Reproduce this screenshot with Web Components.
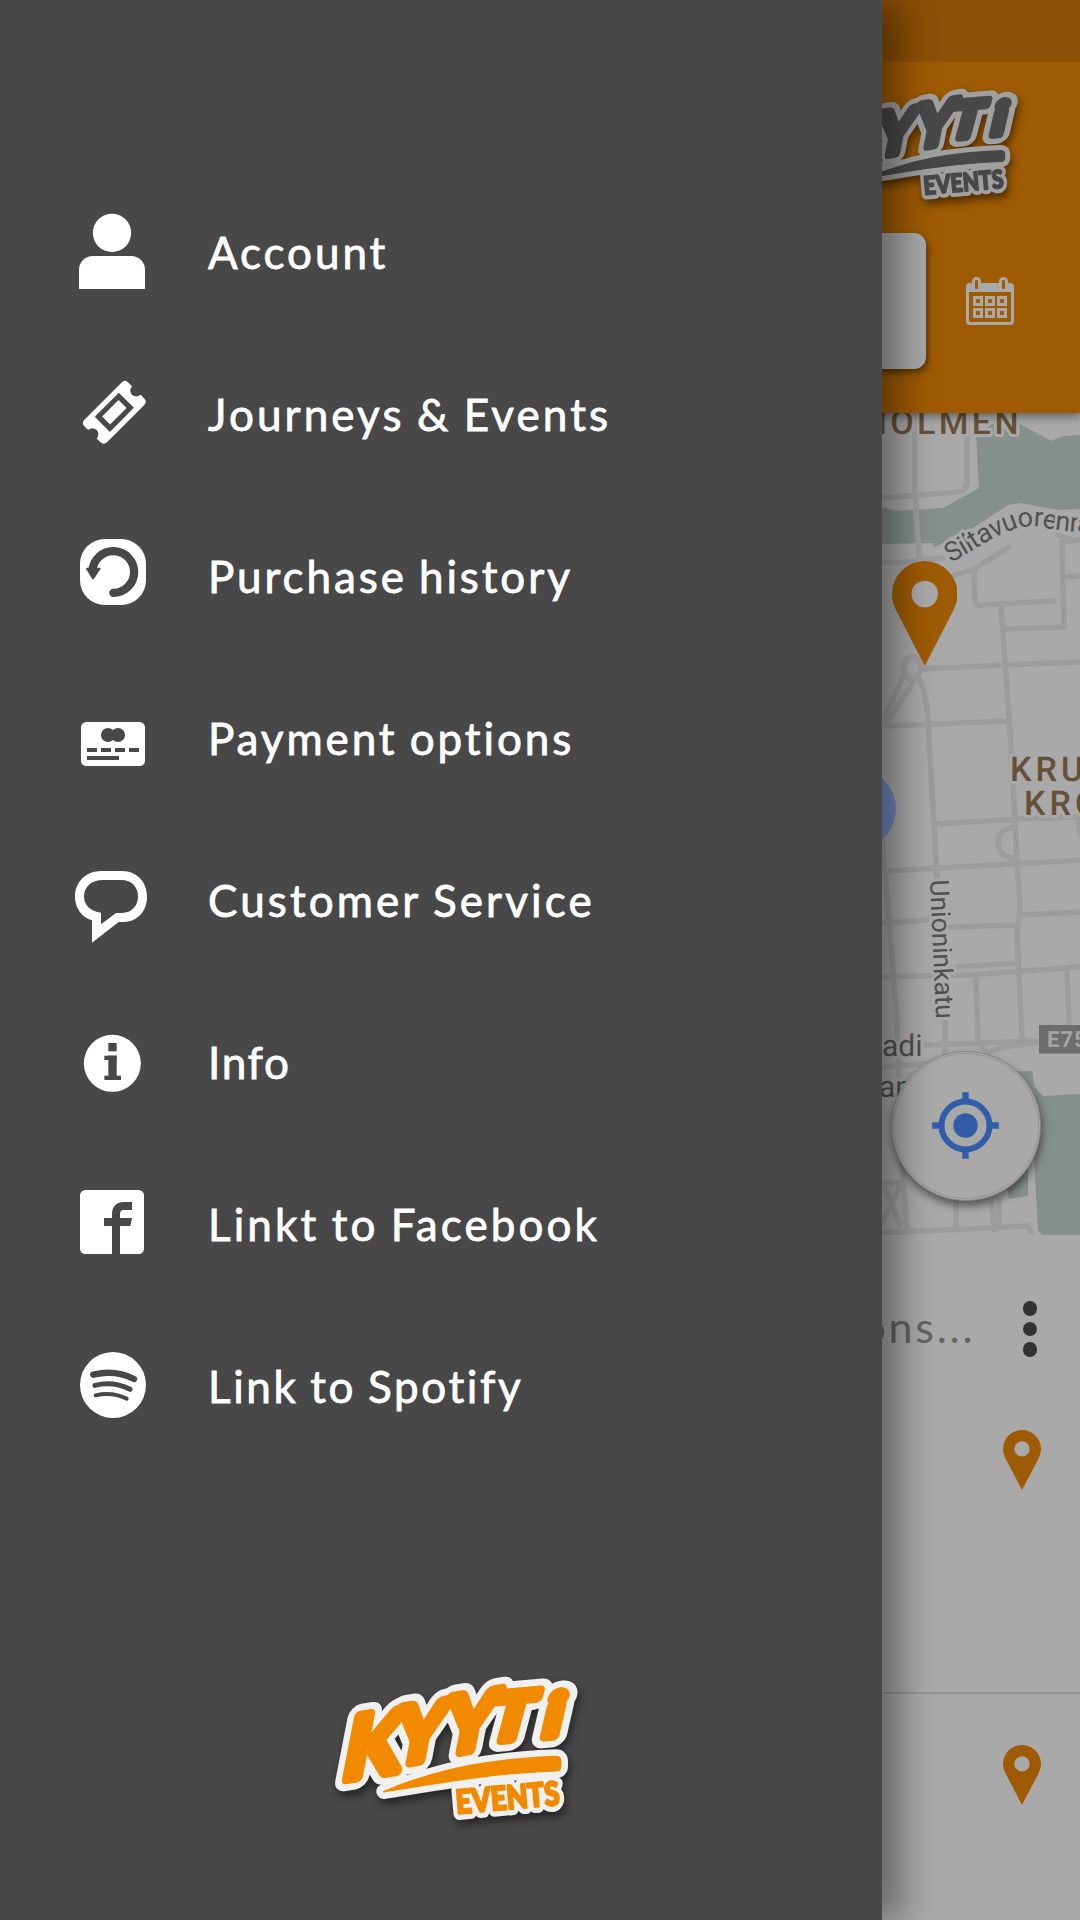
<!DOCTYPE html>
<html lang="en">
<head>
<meta charset="utf-8">
<title>Kyyti Events</title>
<style>
  html, body { margin: 0; height: 100%; }
  body {
    font-family: Lato, "Liberation Sans", sans-serif;
    background: #a9a9a9;
    overflow: hidden;
  }
</style>
</head>
<body>
<kyyti-app></kyyti-app>

<script>
/* Icons share a 240-unit square; --bg is the colour cut out of the glyph. */
const ICONS = {
  account: `
    <circle cx="120" cy="62.500" r="57.500"/>
    <path d="M21 231V174a42 42 0 0 1 42-42H177a42 42 0 0 1 42 42V231Z"/>`,
  ticket: `
    <g transform="translate(127 115) rotate(-45)">
      <path d="M-78-48H78Q93-48 93-33V-18A18 18 0 0 0 93 18V33Q93 48 78 48H-78Q-93 48-93 33V18A18 18 0 0 0-93-18V-33Q-93-48-78-48Z"/>
      <path class="cut" d="M-51-32H51V32H-51Z"/>
      <path d="M-35-17H35V17H-35Z"/>
    </g>`,
  history: `
    <rect x="24" y="9" width="198" height="198" rx="74"/>
    <path class="cut-line" stroke-width="25" d="M61.500 104A62.500 62.500 0 1 1 124 170.500"/>
    <path class="cut" d="M45 95H83Q88 95 85 100L66 128Q63 132 60 128L43 100Q40 95 45 95Z"/>`,
  card: `
    <rect x="27" y="72" width="192" height="132" rx="16"/>
    <g class="cut">
      <circle cx="108" cy="111" r="21"/><circle cx="138" cy="111" r="21"/>
      <path d="M45 150h30v12h-30zM87 150h30v12h-30zM129 150h30v12h-30zM171 150h30v12h-30zM45 174h96v12h-96z"/>
    </g>`,
  chat: `
    <path fill-rule="evenodd" d="M87 33H150C195 33 225 66 225 110C225 154 195 186 152 186H140L60 248V181C30 172 9 145 9 110C9 66 42 33 87 33ZM92 60C60 60 36 80 36 109C36 136 56 155 87 158V193L132 159H150C178 159 198 139 198 109C198 80 178 60 148 60Z"/>`,
  info: `
    <circle cx="121" cy="124" r="85.500"/>
    <g class="cut">
      <rect x="109" y="63" width="25" height="25"/>
      <rect x="97" y="101" width="37" height="13"/>
      <rect x="109" y="101" width="25" height="73"/>
      <rect x="97" y="161" width="50" height="13"/>
    </g>`,
  facebook: `
    <rect x="24" y="18" width="192" height="192" rx="16"/>
    <path class="cut" d="M120 211V126H96V102H120V90C120 68 133 54 156 54H180V78H156Q144 78 144 90V102H180L175 126H144V211Z"/>`,
  spotify: `
    <circle cx="123" cy="117" r="99"/>
    <path class="cut-line" stroke-width="19" d="M64 86Q130 70 186 99"/>
    <path class="cut-line" stroke-width="15" d="M69 118Q125 105 174 130"/>
    <path class="cut-line" stroke-width="12" d="M71 148Q120 137 164 158"/>`,
};

class MenuIcon extends HTMLElement {
  connectedCallback() {
    this.attachShadow({ mode: 'open' }).innerHTML = `
      <style>
        :host { display: block; width: 80px; height: 80px; flex: none; }
        svg { display: block; width: 100%; height: 100%; overflow: visible; fill: #fff; }
        .cut { fill: var(--bg, #484848); }
        .cut-line { fill: none; stroke: var(--bg, #484848); stroke-linecap: round; }
      </style>
      <svg viewBox="0 0 240 240" aria-hidden="true">${ICONS[this.getAttribute('name')] || ''}</svg>`;
  }
}
customElements.define('menu-icon', MenuIcon);

class MenuItem extends HTMLElement {
  connectedCallback() {
    this.attachShadow({ mode: 'open' }).innerHTML = `
      <style>
        :host { display: flex; align-items: center; gap: 56px; height: 162px; padding-left: 72px; }
        .label {
          font-size: 44px;
          line-height: 52px;
          letter-spacing: var(--track, 2.9px);
          word-spacing: -2px;
          white-space: nowrap;
          color: #fff;
          -webkit-text-stroke: .8px #fff;
        }
      </style>
      <menu-icon name="${this.getAttribute('icon')}"></menu-icon>
      <span class="label"><slot></slot></span>`;
  }
}
customElements.define('menu-item', MenuItem);

class KyytiLogo extends HTMLElement {
  connectedCallback() {
    this.attachShadow({ mode: 'open' }).innerHTML = `
      <style>
        :host { display: block; width: 290px; height: 180px; }
        svg { display: block; width: 100%; height: 100%; overflow: visible; filter: drop-shadow(2px 5px 4px rgba(0, 0, 0, .5)); }
        text { font-family: Lato, sans-serif; font-weight: 700; }
        .edge { stroke: var(--edge, #f0f0f0); fill: var(--edge, #f0f0f0); stroke-width: 70; stroke-linejoin: round; }
        .ink { fill: var(--ink, #f28a00); stroke: var(--ink, #f28a00); stroke-width: 30; stroke-linejoin: round; }
        .line.edge { stroke-width: 44; }
        .line.ink { stroke-width: 5; }
        .small.edge { stroke-width: 38; }
        .small.ink { stroke-width: 7; }
      </style>
      <svg viewBox="0 0 870 540">
        <use href="#word" class="edge"/>
        <use href="#swoosh" class="edge line"/>
        <use href="#events" class="edge small"/>
        <g class="ink">
          <g id="word">
            <text transform="translate(91 360) rotate(-9) skewX(-20)" font-size="250">K</text>
            <text transform="translate(243 316) rotate(-9) skewX(-20)" font-size="230">Y</text>
            <text transform="translate(393 284) rotate(-9) skewX(-20)" font-size="230">Y</text>
            <text transform="translate(528 244) rotate(-5) skewX(-20) scale(1.1 1)" font-size="190">T</text>
            <text transform="translate(694 230) rotate(-5) skewX(-18) scale(1.15 1)" font-size="172">i</text>
          </g>
        </g>
        <g class="ink line"><path id="swoosh" d="M221 395C400 320 560 297 738 290Q752 290 752 304V318Q752 332 738 332C560 338 400 366 221 395Z"/></g>
        <g class="ink small"><text id="events" transform="translate(440 461) rotate(-5)" font-size="98" textLength="312" lengthAdjust="spacingAndGlyphs" style="font-weight: 900">EVENTS</text></g>
      </svg>`;
  }
}
customElements.define('kyyti-logo', KyytiLogo);

class MapPin extends HTMLElement {
  connectedCallback() {
    this.attachShadow({ mode: 'open' }).innerHTML = `
      <style>
        :host { display: block; width: 38px; height: 60px; }
        svg { display: block; width: 100%; height: 100%; }
      </style>
      <svg viewBox="0 0 66 105" preserveAspectRatio="none"><path fill="#9f5b04" fill-rule="evenodd" d="M33 0A33 33 0 0 1 66 33C66 40 64 45 61 51L33 105L5 51C2 45 0 40 0 33A33 33 0 0 1 33 0ZM33 19.700A13.300 13.300 0 1 0 33 46.300A13.300 13.300 0 1 0 33 19.700Z"/></svg>`;
  }
}
customElements.define('map-pin', MapPin);

class AppHeader extends HTMLElement {
  connectedCallback() {
    this.attachShadow({ mode: 'open' }).innerHTML = `
      <style>
        :host {
          display: block;
          position: relative;
          height: 413px;
          background: #9f5b04;
          box-shadow: 0 4px 8px rgba(0, 0, 0, .4);
        }
        .status { height: 62px; background: #8c5006; }
        kyyti-logo { width: 224px; height: 139px; margin: 14px 0 18px 811px; --ink: #484848; --edge: #a0a0a0; }
        .row { display: flex; align-items: center; gap: 40px; padding: 0 66px; }
        .search { flex: 1; height: 136px; border-radius: 12px; background: #a9a9a9; box-shadow: 2px 4px 7px rgba(0, 0, 0, .45); }
        svg { width: 48px; height: 48px; fill: #a9a9a9; }
        .hole { fill: #9f5b04; }
      </style>
      <div class="status"></div>
      <kyyti-logo></kyyti-logo>
      <div class="row">
        <div class="search"></div>
        <svg viewBox="0 0 144 144">
          <rect y="18" width="144" height="126" rx="12"/>
          <path class="hole" d="M9 45H135V131Q135 135 131 135H13Q9 135 9 131Z"/>
          <rect x="18" width="27" height="43" rx="13"/><rect x="99" width="27" height="43" rx="13"/>
          <rect class="hole" x="27" y="9" width="9" height="27" rx="4"/><rect class="hole" x="108" y="9" width="9" height="27" rx="4"/>
          <path fill-rule="evenodd" d="${[57, 93].map(y => [21, 57, 93].map(x => `M${x} ${y}h30v30h-30zM${x + 9} ${y + 9}v12h12v-12z`).join('')).join('')}"/>
        </svg>
      </div>`;
  }
}
customElements.define('app-header', AppHeader);

/* Drawn in page coordinates, so the viewBox starts at the drawer's edge. */
class CityMap extends HTMLElement {
  connectedCallback() {
    this.attachShadow({ mode: 'open' }).innerHTML = `
      <style>
        :host { display: block; position: relative; height: 822px; }
        .tiles { display: block; width: 198px; height: 822px; margin-left: auto; }
        .water { fill: #858f8c; }
        .road { fill: none; stroke: #9c9c9c; stroke-width: 5.500; stroke-linecap: round; stroke-linejoin: round; }
        text { font-family: Roboto, sans-serif; fill: #505050; paint-order: stroke; stroke: #a9a9a9; stroke-width: 6; stroke-linejoin: round; text-rendering: geometricPrecision; }
        .district { font-weight: 500; font-size: 34px; letter-spacing: 4px; fill: #655139; }
        map-pin { position: absolute; left: 891.500px; top: 148px; width: 65.500px; height: 105px; }
        .locate {
          position: absolute; left: 890.500px; top: 637.500px; width: 148px; height: 148px;
          border: 1px solid #858585; border-radius: 50%; background: #a9a9a9;
          box-shadow: inset 0 0 0 1px #adadad, inset 0 0 0 2px #949494, 1px 5px 9px rgba(0, 0, 0, .5);
          display: flex; align-items: center; justify-content: center;
        }
        .locate svg { width: 67px; height: 67px; }
      </style>
      <svg class="tiles" viewBox="882 413 198 822">
        <rect x="882" y="413" width="198" height="822" fill="#a9a9a9"/>
        <path class="water" d="M976 434L992 424H1020L1051 441L1063 436L1080 435V509L1060 510L1047 508L1020 503L1008 505L970 530L950 537L940 545L934 547L933 543L882 544V507L897 511L943 508L979 488Z"/>
        <path class="water" d="M1000 1072L1032.500 1071L1034 1086L1043 1096L1080 1094V1235H1042L1038 1230L1033.500 1150L1028 1155V1196L1009 1199L1000 1150Z"/>
        <path class="road" d="
          M915 413V493L918 540L921 580 M882 498L958 492Q967 491 967 480V413
          M882 562L897 563L943 558 M953 576L974 569L1009 547 M974 569L975 602Q976 606 982 605L1053 601
          M1001 605L1010 730L1018 877L1020 907L1017 937L1019 973L1022 1038
          M1005 629L1064 627L1062 542L1080 540 M1058 535L1075 541 M1063 577L1080 576
          M923 669L1005 665L1080 662 M903 677L882 722 M913 683L884 726 M920 680Q927 697 928 720L937 877
          M888 726L1007 721 M937 824L1019 819L1080 817 M1078 818L1080 834
          M1013 827Q998 830 998 842Q998 856 1013 858 M887 871L1080 860
          M882 840L888 907L897 1020L902 1157L907 1232
          M882 923L927 920 M950 927L1018 925 M1020 915L1080 912
          M955 967L1017 963 M882 977L970 975L1080 967 M976 977L978 1040L985 1050 M1067 970L1069 1022
          M923 1045L1036 1041 M987 1053Q1000 1046 1036 1043 M945 1020V1057 M882 1067L937 1063
          M882 1233L1028 1226L1032 1235 M882 1183H902 M884 1187L900 1224 M900 1187L882 1222
          M956 1200V1230 M992 1203L994 1230 M999 1200V1228"/>
        <ellipse class="road" cx="912" cy="668" rx="8" ry="12"/>
        <circle cx="855" cy="809" r="41" fill="#7088bb"/>
        <text class="district" x="1022" y="434" text-anchor="end" style="letter-spacing: 3.400px">HOLMEN</text>
        <text class="district" x="1010" y="781.300">KRU</text>
        <text class="district" x="1024" y="815.300">KRO</text>
        <path id="quay" fill="none" d="M951 563L975 549Q990 539 1007 532Q1027 523 1047 528Q1063 532 1110 534"/>
        <text font-size="27" letter-spacing="-.6"><textPath href="#quay">Siltavuorenra</textPath></text>
        <text font-size="26.300" transform="translate(930 880) rotate(87.500)">Unioninkatu</text>
        <text font-size="30" x="882" y="1056">adi</text>
        <text font-size="30" x="879" y="1097">an</text>
        <rect x="1039" y="1025" width="41" height="28.500" fill="#6d6d6d"/>
        <text x="1047" y="1047" style="font-size: 22px; font-weight: 700; fill: #a5a5a5; stroke: none; letter-spacing: 1px">E75</text>
      </svg>
      <map-pin></map-pin>
      <div class="locate">
        <svg viewBox="-33.500 -33.500 67 67" fill="#315da8">
          <circle r="24" fill="none" stroke="#315da8" stroke-width="6"/>
          <circle r="12.200"/>
          <path d="M-3.200-33.300h6.400v8h-6.400zM-3.200 25.300h6.400v8h-6.400zM-33.300-3.200h8v6.400h-8zM25.300-3.200h8v6.400h-8z"/>
        </svg>
      </div>`;
  }
}
customElements.define('city-map', CityMap);

class StopList extends HTMLElement {
  connectedCallback() {
    this.attachShadow({ mode: 'open' }).innerHTML = `
      <style>
        :host { display: block; background: #a9a9a9; height: 685px; }
        .group { height: 457px; border-bottom: 2px solid #939393; }
        .title { display: flex; align-items: center; justify-content: flex-end; gap: 49px; height: 188px; padding-right: 43px; }
        .title span { font-size: 43px; letter-spacing: 2.800px; margin: 0 -2px 5px 0; color: #626262; }
        .more { display: grid; gap: 6px; }
        .more i { width: 14.500px; height: 14.500px; border-radius: 50%; background: #323232; }
        .stop { display: flex; justify-content: flex-end; padding: 7px 39px 0; }
        .stop.next { padding-top: 51px; }
      </style>
      <div class="group">
        <div class="title"><span>ons...</span><div class="more"><i></i><i></i><i></i></div></div>
        <div class="stop"><map-pin></map-pin></div>
      </div>
      <div class="stop next"><map-pin></map-pin></div>`;
  }
}
customElements.define('stop-list', StopList);

class NavDrawer extends HTMLElement {
  connectedCallback() {
    this.attachShadow({ mode: 'open' }).innerHTML = `
      <style>
        :host {
          position: absolute;
          inset: 0 auto 0 0;
          width: 882px;
          box-sizing: border-box;
          padding-top: 171px;
          display: flex;
          flex-direction: column;
          background: #484848;
          box-shadow: 20px 0 32px rgba(0, 0, 0, .37);
        }
        nav { flex: none; }
        kyyti-logo { margin: 193px 0 0 310px; }
      </style>
      <nav><slot></slot></nav>
      <kyyti-logo></kyyti-logo>`;
  }
}
customElements.define('nav-drawer', NavDrawer);

class KyytiApp extends HTMLElement {
  connectedCallback() {
    this.attachShadow({ mode: 'open' }).innerHTML = `
      <style>
        :host { display: flex; flex-direction: column; position: relative; width: 1080px; height: 1920px; overflow: hidden; }
        app-header { flex: none; z-index: 1; }
        nav-drawer { z-index: 2; }
      </style>
      <app-header></app-header>
      <city-map></city-map>
      <stop-list></stop-list>
      <nav-drawer>
        <menu-item icon="account" style="--track: 2.900px">Account</menu-item>
        <menu-item icon="ticket" style="--track: 3.100px">Journeys &amp; Events</menu-item>
        <menu-item icon="history">Purchase history</menu-item>
        <menu-item icon="card">Payment options</menu-item>
        <menu-item icon="chat" style="--track: 3.100px">Customer Service</menu-item>
        <menu-item icon="info" style="--track: 1.700px">Info</menu-item>
        <menu-item icon="facebook" style="--track: 3.100px">Linkt to Facebook</menu-item>
        <menu-item icon="spotify" style="--track: 2.600px">Link to Spotify</menu-item>
      </nav-drawer>`;
  }
}
customElements.define('kyyti-app', KyytiApp);
</script>
</body>
</html>
